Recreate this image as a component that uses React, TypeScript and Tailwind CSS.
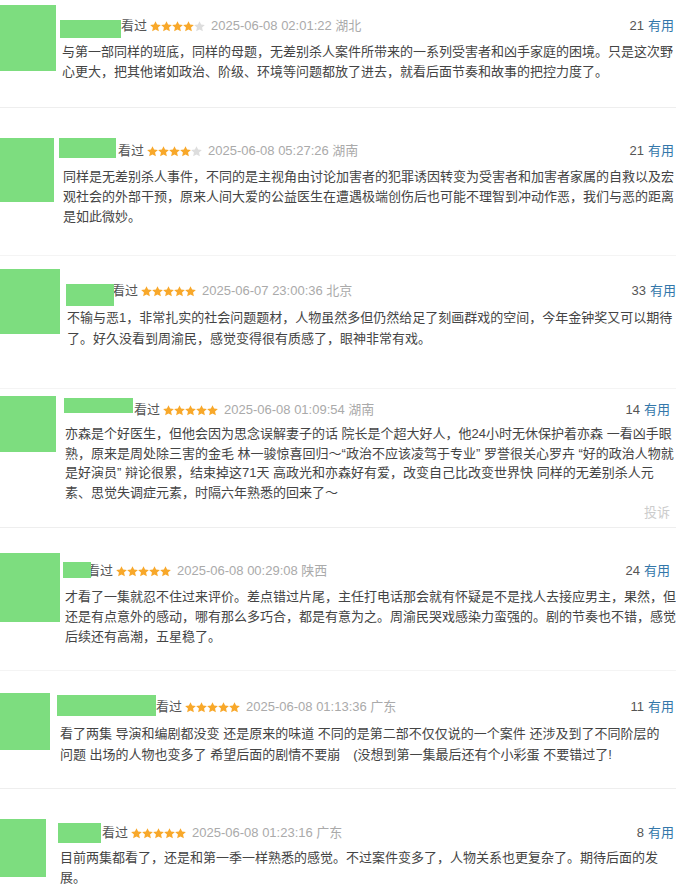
import React from 'react';

type Comment = {
  wrap: string;
  avatar: string;
  body: string;
  head: string;
  name: string;
  meta: string;
  count: string;
  text: string;
  stars: number;
  date: string;
  loc: string;
  useful: number;
  lines: string[];
  report?: string;
};

const comments: Comment[] = [
  {
    wrap: 'h-[108px] border-b border-[#eeeeee]',
    avatar: 'w-[56px] h-[66px] mt-[5px]',
    body: 'ml-[4px] pr-[2px]',
    head: 'h-[42px]',
    name: 'w-[61px] h-[18px] mt-[20px]',
    meta: 'mt-[16px] ml-0',
    count: 'mt-[16px]',
    text: 'ml-[2px] leading-[20px]',
    stars: 4,
    date: '2025-06-08 02:01:22',
    loc: '湖北',
    useful: 21,
    lines: [
      '与第一部同样的班底，同样的母题，无差别杀人案件所带来的一系列受害者和凶手家庭的困境。只是这次野',
      '心更大，把其他诸如政治、阶级、环境等问题都放了进去，就看后面节奏和故事的把控力度了。',
    ],
  },
  {
    wrap: 'h-[148px] border-b border-[#f4f4f4]',
    avatar: 'w-[54px] h-[64px] mt-[30px]',
    body: 'ml-[5px] pr-[2px]',
    head: 'h-[59px]',
    name: 'w-[57px] h-[20px] mt-[30px]',
    meta: 'mt-[33px] ml-[2px]',
    count: 'mt-[33px]',
    text: 'ml-[4px] leading-[20px]',
    stars: 4,
    date: '2025-06-08 05:27:26',
    loc: '湖南',
    useful: 21,
    lines: [
      '同样是无差别杀人事件，不同的是主视角由讨论加害者的犯罪诱因转变为受害者和加害者家属的自救以及宏',
      '观社会的外部干预，原来人间大爱的公益医生在遭遇极端创伤后也可能不理智到冲动作恶，我们与恶的距离',
      '是如此微妙。',
    ],
  },
  {
    wrap: 'h-[133px] border-b border-[#f4f4f4]',
    avatar: 'w-[60px] h-[65px] mt-[13px]',
    body: 'ml-[6px] pr-0',
    head: 'h-[51px]',
    name: 'w-[48px] h-[22px] mt-[28px]',
    meta: 'mt-[25px] -ml-[2px]',
    count: 'mt-[25px]',
    text: 'ml-[1px] leading-[21px]',
    stars: 5,
    date: '2025-06-07 23:00:36',
    loc: '北京',
    useful: 33,
    lines: [
      '不输与恶1，非常扎实的社会问题题材，人物虽然多但仍然给足了刻画群戏的空间，今年金钟奖又可以期待',
      '了。好久没看到周渝民，感觉变得很有质感了，眼神非常有戏。',
    ],
  },
  {
    wrap: 'h-[139px] border-b border-[#eeeeee]',
    avatar: 'w-[56px] h-[56px] mt-[7px]',
    body: 'ml-[8px] pr-[6px]',
    head: 'h-[35px]',
    name: 'w-[69px] h-[15px] mt-[9px]',
    meta: 'mt-[11px] ml-[1px]',
    count: 'mt-[11px]',
    text: 'ml-[1px] leading-[19.5px]',
    stars: 5,
    date: '2025-06-08 01:09:54',
    loc: '湖南',
    useful: 14,
    lines: [
      '亦森是个好医生，但他会因为思念误解妻子的话 院长是个超大好人，他24小时无休保护着亦森 一看凶手眼',
      '熟，原来是周处除三害的金毛 林一骏惊喜回归～“政治不应该凌驾于专业” 罗誉很关心罗卉 “好的政治人物就',
      '是好演员” 辩论很累，结束掉这71天 高政光和亦森好有爱，改变自己比改变世界快 同样的无差别杀人元',
      '素、思觉失调症元素，时隔六年熟悉的回来了～',
    ],
    report: 'mt-[1px]',
  },
  {
    wrap: 'h-[143px] border-b border-[#f4f4f4]',
    avatar: 'w-[60px] h-[69px] mt-[25px]',
    body: 'ml-[3px] pr-[6px]',
    head: 'h-[59px]',
    name: 'w-[28px] h-[16px] mt-[34px]',
    meta: 'mt-[33px] -ml-[4px]',
    count: 'mt-[33px]',
    text: 'ml-[2px] leading-[20px]',
    stars: 5,
    date: '2025-06-08 00:29:08',
    loc: '陕西',
    useful: 24,
    lines: [
      '才看了一集就忍不住过来评价。差点错过片尾，主任打电话那会就有怀疑是不是找人去接应男主，果然，但',
      '还是有点意外的感动，哪有那么多巧合，都是有意为之。周渝民哭戏感染力蛮强的。剧的节奏也不错，感觉',
      '后续还有高潮，五星稳了。',
    ],
  },
  {
    wrap: 'h-[118px] border-b border-[#eeeeee]',
    avatar: 'w-[50px] h-[57px] mt-[22px]',
    body: 'ml-[7px] pr-[2px]',
    head: 'h-[52px]',
    name: 'w-[99px] h-[21px] mt-[24px]',
    meta: 'mt-[26px] ml-0',
    count: 'mt-[26px]',
    text: 'ml-[3px] leading-[21px]',
    stars: 5,
    date: '2025-06-08 01:13:36',
    loc: '广东',
    useful: 11,
    lines: [
      '看了两集 导演和编剧都没变 还是原来的味道 不同的是第二部不仅仅说的一个案件 还涉及到了不同阶层的',
      '问题 出场的人物也变多了 希望后面的剧情不要崩　(没想到第一集最后还有个小彩蛋 不要错过了!',
    ],
  },
  {
    wrap: 'h-[106px]',
    avatar: 'w-[46px] h-[58px] mt-[30px]',
    body: 'ml-[12px] pr-[2px]',
    head: 'h-[59px]',
    name: 'w-[43px] h-[20px] mt-[34px]',
    meta: 'mt-[34px] ml-[1px]',
    count: 'mt-[34px]',
    text: 'ml-[2px] leading-[20px]',
    stars: 5,
    date: '2025-06-08 01:23:16',
    loc: '广东',
    useful: 8,
    lines: [
      '目前两集都看了，还是和第一季一样熟悉的感觉。不过案件变多了，人物关系也更复杂了。期待后面的发',
      '展。',
    ],
    report: 'mt-[4px]',
  },
];

function Stars({ n }: { n: number }) {
  return (
    <span className="flex ml-[3px] mr-[6px]">
      {[0, 1, 2, 3, 4].map(i => (
        <svg key={i} width="11" height="11" viewBox="0 0 22 22">
          <path
            d="M11 0.3l3.2 6.9 7.5.8-5.6 5.1 1.6 7.6L11 16.9l-6.7 3.8 1.6-7.6L0.3 8l7.5-.8z"
            fill={i < n ? '#f8a82a' : '#dddddd'}
          />
        </svg>
      ))}
    </span>
  );
}

function CommentItem({ c }: { c: Comment }) {
  return (
    <div className={`flex ${c.wrap}`}>
      {/* avatar (redacted) */}
      <div className={`bg-[#7ddd7f] shrink-0 ${c.avatar}`} />
      <div className={`flex-1 min-w-0 ${c.body}`}>
        <div className={`flex items-start ${c.head}`}>
          <div className={`relative z-10 bg-[#7ddd7f] shrink-0 ${c.name}`} />
          <div className={`flex items-center h-[20px] text-[13px] whitespace-nowrap ${c.meta}`}>
            <span className="text-[#555]">看过</span>
            <Stars n={c.stars} />
            <span className="text-[#aaa]">{c.date} {c.loc}</span>
          </div>
          <div className={`ml-auto flex items-center h-[20px] text-[13px] whitespace-nowrap ${c.count}`}>
            <span className="text-[#555]">{c.useful}</span>
            <span className="ml-[4px] text-[#3377aa]">有用</span>
          </div>
        </div>
        <div className={`text-[13px] text-[#444] ${c.text}`}>
          {c.lines.map((l, i) => <div key={i} className="whitespace-pre">{l}</div>)}
        </div>
        {c.report && <div className={`flex justify-end text-[13px] text-[#ccc] leading-[20px] ${c.report}`}>投诉</div>}
      </div>
    </div>
  );
}

export default function App() {
  return (
    <div className="w-[676px] h-[894px] overflow-hidden bg-white font-['Liberation_Sans','Noto_Sans_CJK_SC',sans-serif]">
      {comments.map((c, i) => <CommentItem key={i} c={c} />)}
    </div>
  );
}
